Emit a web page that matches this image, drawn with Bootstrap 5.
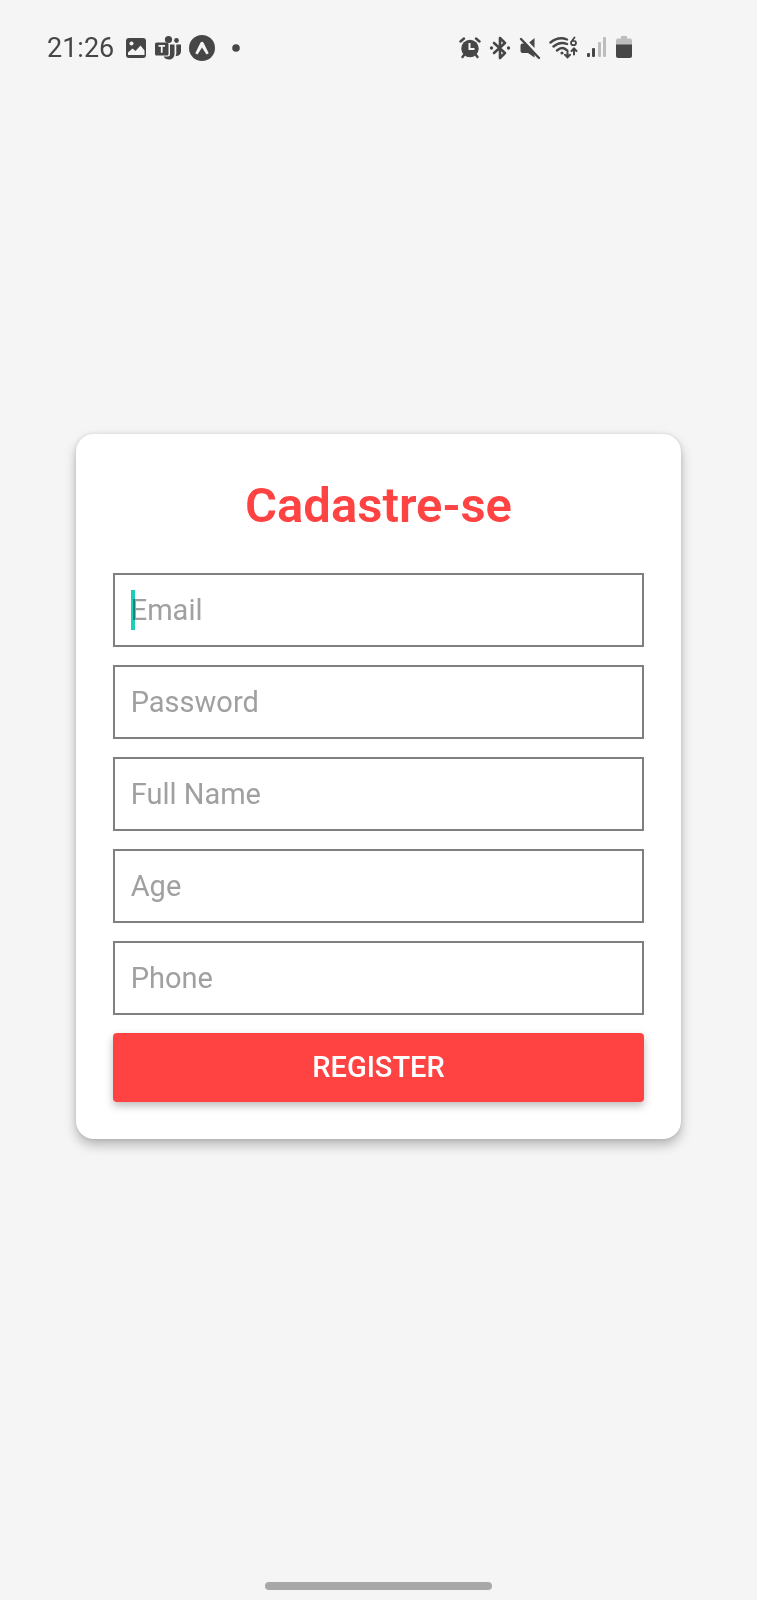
<!DOCTYPE html>
<html lang="pt-BR">
<head>
<meta charset="utf-8">
<meta name="viewport" content="width=device-width, initial-scale=1">
<title>Cadastre-se</title>
<link href="https://cdn.jsdelivr.net/npm/bootstrap@5.3.0/dist/css/bootstrap.min.css" rel="stylesheet">
<style>
  body { background: #f5f5f5; font-family: Roboto, "Liberation Sans", sans-serif; }
  .status-bar { height: 96px; padding: 0 125px 0 47px; color: #464646; }
  .status-bar svg { height: 26px; display: block; }
  .clock { font-size: 27px; line-height: 32px; margin-right: 11px; }
  .notices { gap: 8px; }
  .system { gap: 8px; }
  .signup { width: 80%; padding: 37px; border: 0; border-radius: 18px; box-shadow: 0 6px 12px rgba(0,0,0,.26), 0 0 4px rgba(0,0,0,.1); }
  .signup h1 { font-size: 49px; line-height: 69px; margin-bottom: 33px; font-weight: 600; color: #ff4242; }
  .fields { gap: 18px; }
  .fields .form-control { height: 74px; padding: 0 16px; border: 2px solid #808080; border-radius: 0; font-size: 29px; background: #fff; box-shadow: none; }
  .fields .form-control::placeholder { color: #a0a0a0; }
  .caret { left: 18px; top: 17px; width: 4px; height: 40px; background: #1ccdb8; mix-blend-mode: multiply; }
  .btn-register { height: 69px; padding: 0; border: 0; border-radius: 4px; background: #ff4242; color: #fff; font-size: 29px; font-weight: 500; box-shadow: 0 4px 8px rgba(0,0,0,.26); }
  .btn-register:hover { background: #e63a3a; color: #fff; }
  .home-area { height: 123px; padding-bottom: 10px; }
  .home-pill { width: 30%; height: 8px; border-radius: 4px; background: #a8a8a8; }
</style>
</head>
<body class="min-vh-100 d-flex flex-column">
<header class="status-bar d-flex align-items-center justify-content-between">
  <div class="d-flex align-items-center">
    <time class="clock">21:26</time>
    <div class="notices d-flex align-items-center">
      <svg width="22" viewBox="0 0 22 26" aria-hidden="true"><rect x="1" y="3" width="20" height="20" rx="3" fill="currentColor"/><circle cx="6.500" cy="8.500" r="2" fill="#f5f5f5"/><path d="M3 17.500l4.500-4 3 2.500 5-5.500 4 5v4.500H3z" fill="#f5f5f5"/></svg>
      <svg width="26" viewBox="0 0 26 26" fill="currentColor" aria-hidden="true"><circle cx="13.500" cy="4.500" r="3.600"/><circle cx="21.500" cy="5.500" r="2.400"/><path d="M15 9.500h4.500v9c0 4-2.500 6-5.500 6-2.500 0-4.500-1-5.300-3H13a2 2 0 0 0 2-2zM21.300 9.500H26v6.500c0 3-2 5-5.300 5 .5-1 .6-2 .6-3z"/><rect x="0" y="7.500" width="13.500" height="13" rx="1.500"/><path d="M3.500 10.800h6.500M6.750 10.800v7" stroke="#f5f5f5" stroke-width="1.800" fill="none"/></svg>
      <svg width="26" viewBox="0 0 26 26" aria-hidden="true"><circle cx="13" cy="13" r="13" fill="currentColor"/><path d="M6.300 18.200L11.300 8c.8-1.700 2.600-1.700 3.400 0l5 10.200-2.200 1.200L13 12.500l-4.500 6.900z" fill="#f5f5f5"/></svg>
      <svg width="26" viewBox="0 0 26 26" aria-hidden="true"><circle cx="13" cy="13" r="3.800" fill="currentColor"/></svg>
    </div>
  </div>
  <div class="system d-flex align-items-center">
    <svg width="22" viewBox="0 0 22 26" aria-hidden="true"><circle cx="11" cy="13.500" r="8.700" fill="currentColor"/><path d="M1.500 6.500L5 3.500M20.500 6.500L17 3.500M5 20l-1.500 2M17 20l1.500 2" stroke="currentColor" stroke-width="2.400" fill="none" stroke-linecap="round"/><path d="M10.500 8v6h5" fill="none" stroke="#f5f5f5" stroke-width="2"/></svg>
    <svg width="22" viewBox="0 0 22 26" aria-hidden="true"><path d="M5 8l11 10-5 5V3l5 5L5 18" fill="none" stroke="currentColor" stroke-width="2.600" stroke-linejoin="round" stroke-linecap="round"/><circle cx="2.500" cy="13" r="1.700" fill="currentColor"/><circle cx="19.500" cy="13" r="1.700" fill="currentColor"/></svg>
    <svg width="22" viewBox="0 0 22 26" aria-hidden="true"><path d="M15.500 3v19.500L9 18H3.500a2 2 0 0 1-2-2v-5.500a2 2 0 0 1 2-2H9z" fill="currentColor"/><path d="M3.500 2.500l18 19" stroke="#f5f5f5" stroke-width="3"/><path d="M2 4l18 19" stroke="currentColor" stroke-width="2.400" stroke-linecap="round"/></svg>
    <svg width="30" viewBox="0 0 30 26" fill="none" stroke="currentColor" stroke-width="2.400" stroke-linecap="round" aria-hidden="true"><path d="M1.500 7.500Q9.500 1 18 4.500M4.500 11.500Q11 6 18 9M8 15.500q5-4.500 9.500-.5"/><circle cx="13" cy="18" r="1.600" fill="currentColor" stroke="none"/><path d="M18.500 15.500v6.500M16 19.800l2.500 2.500 2.500-2.500M25 19.500v-6M22.500 16l2.500-2.500 2.500 2.500" stroke-width="2"/><path d="M25.500 2.500l-3 4M27 8a2.500 2.200 0 1 1-5 0 2.500 2.200 0 1 1 5 0z" stroke-width="1.800"/></svg>
    <svg width="21" viewBox="0 0 21 26" fill="currentColor" aria-hidden="true"><rect x="0" y="18" width="3" height="4" rx="1"/><rect x="5" y="13" width="3" height="9" rx="1"/><g fill="#bdbdbd"><rect x="11" y="7" width="3" height="15" rx="1"/><rect x="16" y="2" width="3" height="20" rx="1"/></g></svg>
    <svg width="16" viewBox="0 0 16 26" aria-hidden="true"><path d="M5 1h6v2.500h3a2 2 0 0 1 2 2V10H0V5.500a2 2 0 0 1 2-2h3z" fill="#bdbdbd"/><path d="M0 9.500h16V21a2 2 0 0 1-2 2H2a2 2 0 0 1-2-2z" fill="currentColor"/></svg>
  </div>
</header>
<main class="flex-grow-1 d-flex align-items-center justify-content-center">
  <form class="signup card">
    <h1 class="text-center">Cadastre-se</h1>
    <div class="fields d-flex flex-column">
      <div class="position-relative">
        <input type="email" class="form-control" placeholder="Email" aria-label="Email">
        <span class="caret position-absolute" aria-hidden="true"></span>
      </div>
      <input type="password" class="form-control" placeholder="Password" aria-label="Password">
      <input type="text" class="form-control" placeholder="Full Name" aria-label="Full Name">
      <input type="text" inputmode="numeric" class="form-control" placeholder="Age" aria-label="Age">
      <input type="tel" class="form-control" placeholder="Phone" aria-label="Phone">
      <button type="submit" class="btn btn-register w-100">REGISTER</button>
    </div>
  </form>
</main>
<footer class="home-area d-flex align-items-end justify-content-center">
  <div class="home-pill"></div>
</footer>
<script src="https://cdn.jsdelivr.net/npm/bootstrap@5.3.0/dist/js/bootstrap.bundle.min.js"></script>
</body>
</html>
